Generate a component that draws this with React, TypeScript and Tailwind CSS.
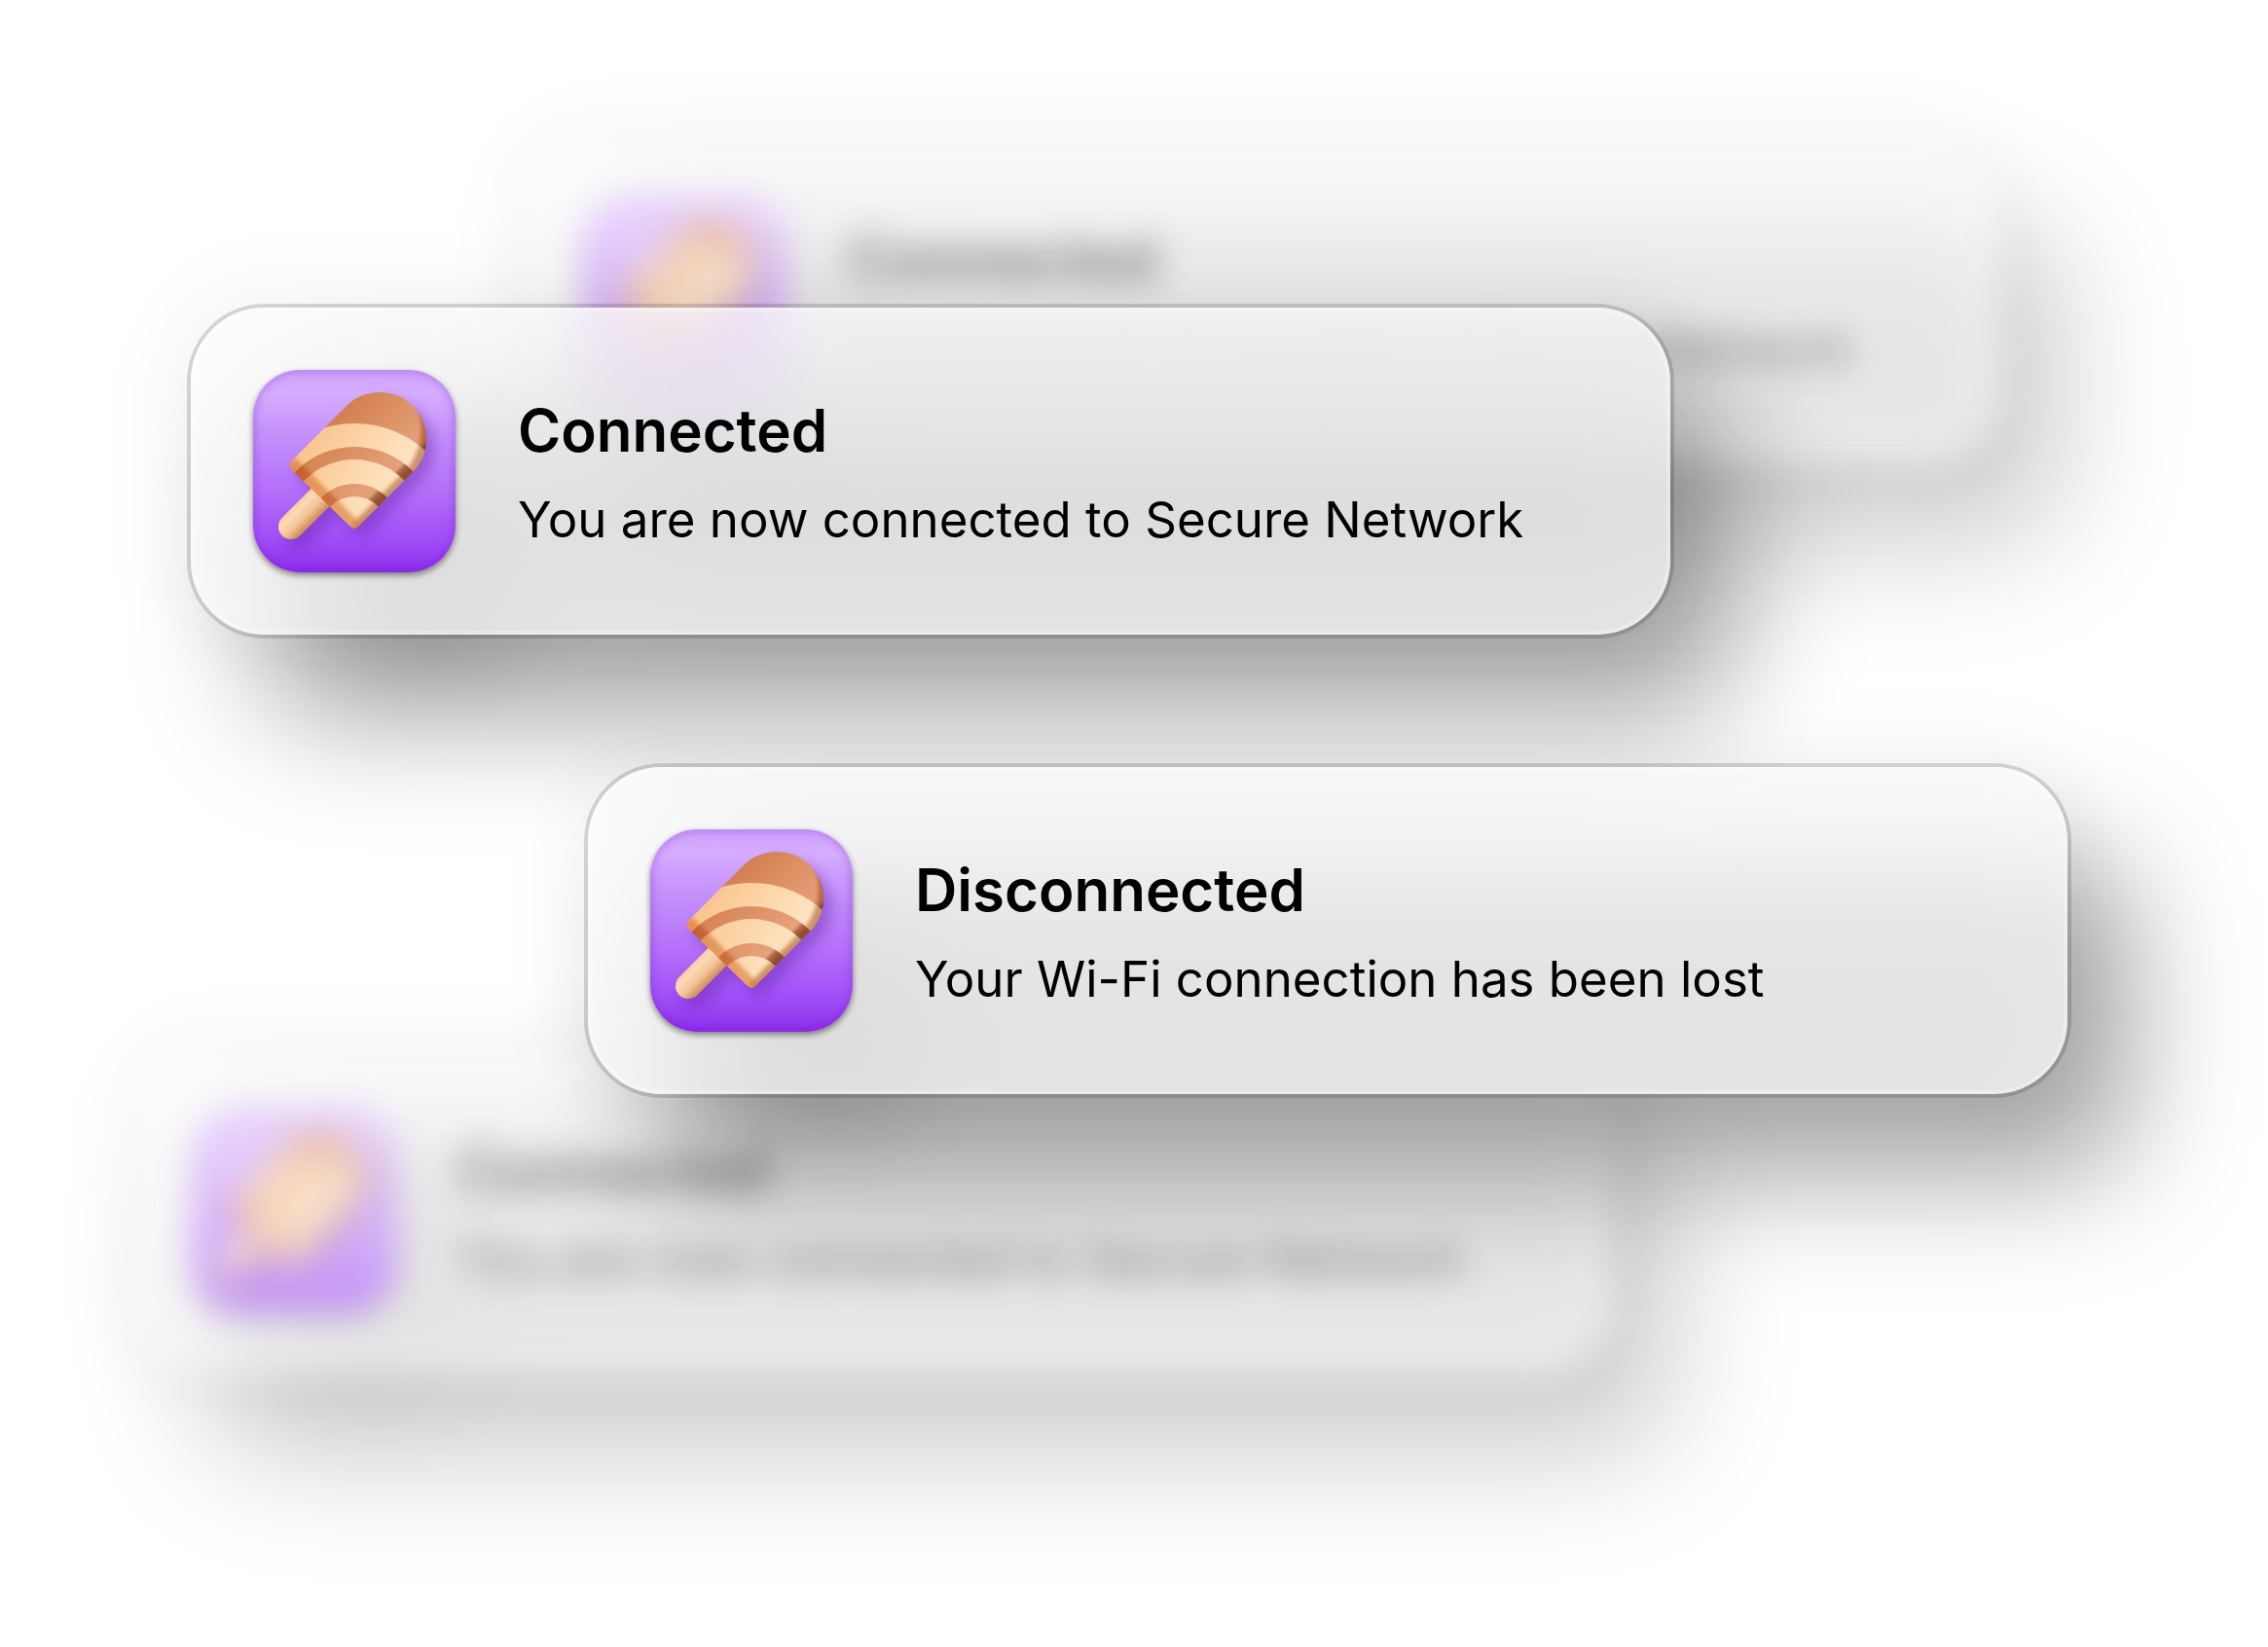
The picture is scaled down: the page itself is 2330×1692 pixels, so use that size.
import { useId } from "react";

const BODY =
  "M96 37 A48 48 0 0 1 164 105 L108.5 160.500 Q104 165 99.500 160.500 L40.500 103.500 Q35 98 40.500 92.500 Z";
const RIGHT_EDGE = "M180 38 Q189 76 167 106 L107 167";
const LEFT_EDGE = "M34 98 L104 168";

function AppIcon() {
  const id = useId().replace(/:/g, "");
  const ref = (name: string) => `url(#${id}${name})`;
  return (
    <div className="size-[208px] shrink-0 overflow-hidden rounded-[48px] shadow-[0_3px_6px_rgba(0,0,0,0.45)]">
      <svg viewBox="0 0 208 208" className="block size-full" aria-hidden="true">
        <defs>
          <linearGradient id={`${id}bg`} x1="0" y1="0" x2="0" y2="1">
            <stop offset="0" stopColor="#cfa3fa" />
            <stop offset="0.12" stopColor="#d5acff" />
            <stop offset="0.3" stopColor="#c693fb" />
            <stop offset="0.6" stopColor="#b46ffa" />
            <stop offset="0.85" stopColor="#9f4bf6" />
            <stop offset="0.93" stopColor="#963cf0" />
            <stop offset="1" stopColor="#8b2bea" />
          </linearGradient>
          <linearGradient id={`${id}cream`} gradientUnits="userSpaceOnUse" x1="50" y1="70" x2="145" y2="130">
            <stop offset="0" stopColor="#f9c28a" />
            <stop offset="0.45" stopColor="#fcd3a5" />
            <stop offset="1" stopColor="#fee6c8" />
          </linearGradient>
          <linearGradient id={`${id}brown`} gradientUnits="userSpaceOnUse" x1="66" y1="66" x2="134" y2="134">
            <stop offset="0" stopColor="#d48050" />
            <stop offset="0.86" stopColor="#e6a27a" />
            <stop offset="0.91" stopColor="#a8694a" />
            <stop offset="1" stopColor="#b87850" />
          </linearGradient>
          <linearGradient id={`${id}stick`} gradientUnits="userSpaceOnUse" x1="40" y1="136" x2="60" y2="156">
            <stop offset="0" stopColor="#f6c594" />
            <stop offset="0.35" stopColor="#fbdab6" />
            <stop offset="0.7" stopColor="#f3c295" />
            <stop offset="1" stopColor="#d39360" />
          </linearGradient>
          <clipPath id={`${id}body`}>
            <path d={BODY} />
          </clipPath>
          <filter id={`${id}soft`} x="-30%" y="-30%" width="160%" height="160%">
            <feGaussianBlur stdDeviation="2.200" />
          </filter>
          <filter id={`${id}shade`} x="-30%" y="-30%" width="160%" height="160%">
            <feGaussianBlur stdDeviation="7" />
          </filter>
          <filter id={`${id}rim`} x="-30%" y="-30%" width="160%" height="160%">
            <feGaussianBlur stdDeviation="5" />
          </filter>
        </defs>
        <rect width="208" height="208" fill={ref("bg")} />
        <rect x="-3" y="-3" width="214" height="214" rx="49" fill="none" stroke="#7422cc" strokeOpacity="0.3" strokeWidth="10" filter={ref("rim")} />
        <g filter={ref("shade")} opacity="0.38" transform="translate(8 9)">
          <path d={BODY} fill="#5a1d9c" />
          <path d="M39 161 L75 125" stroke="#5a1d9c" strokeWidth="26" strokeLinecap="round" />
        </g>
        <path d="M39 161 L78 122" stroke={ref("stick")} strokeWidth="26" strokeLinecap="round" />
        <g clipPath={ref("body")}>
          <rect width="208" height="208" fill={ref("brown")} />
          <circle cx="104" cy="164" r="109" fill={ref("cream")} />
          <circle cx="104" cy="164" r="85" fill={ref("brown")} />
          <circle cx="104" cy="164" r="72" fill={ref("cream")} />
          <circle cx="104" cy="164" r="47" fill={ref("brown")} />
          <circle cx="104" cy="164" r="34" fill={ref("cream")} />
          <g className="mix-blend-multiply" fill="none">
            <path d={RIGHT_EDGE} stroke="#b2703f" strokeOpacity="0.65" strokeWidth="19" filter={ref("soft")} />
            <path d={LEFT_EDGE} stroke="#dc8c48" strokeOpacity="0.6" strokeWidth="24" filter={ref("soft")} />
          </g>
        </g>
      </svg>
    </div>
  );
}

function Notification({ title, message }: { title: string; message: string }) {
  return (
    <article className="relative w-full max-w-[1528px] rounded-[80px] border-4 border-black/15">
      <div className="absolute -inset-8 rounded-[112px] bg-black/3 blur-[32px]" />
      <div className="absolute inset-0 translate-x-[68px] translate-y-[88px] rounded-[80px] bg-black/34 blur-[62px]" />
      <div className="absolute top-16 left-16 size-[208px] translate-x-[80px] translate-y-[90px] rounded-full bg-black/14 blur-[54px]" />
      <div className="relative flex items-center gap-16 rounded-[76px] bg-white/70 p-16 shadow-[inset_0_0_0_4px_rgba(255,255,255,0.25)] backdrop-blur-[36px]">
        <AppIcon />
        <div className="flex flex-col gap-2 pt-2 whitespace-nowrap text-black">
          <h2 className="text-[60px] leading-[84px] font-semibold">{title}</h2>
          <p className="text-[51px] leading-[84px]">{message}</p>
        </div>
      </div>
    </article>
  );
}

export default function App() {
  return (
    <main className="relative min-h-screen overflow-hidden bg-white font-['Inter',sans-serif]">
      <div aria-hidden="true" className="absolute top-[136px] left-[531px] w-[1528px] opacity-55 blur-[18px]">
        <Notification title="Connected" message="You are now connected to Secure Network" />
      </div>
      <div aria-hidden="true" className="absolute top-[1072px] left-[131px] w-[1528px] opacity-55 blur-[18px]">
        <Notification title="Connected" message="You are now connected to Secure Network" />
      </div>
      <section aria-label="Notifications" className="relative flex flex-col gap-32 pt-[312px] pr-[202px] pl-48">
        <Notification title="Connected" message="You are now connected to Secure Network" />
        <div className="flex justify-end">
          <Notification title="Disconnected" message="Your Wi-Fi connection has been lost" />
        </div>
      </section>
    </main>
  );
}
